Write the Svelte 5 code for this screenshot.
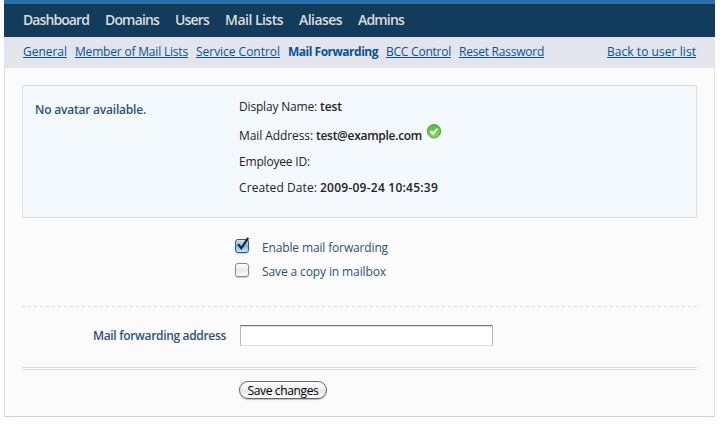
<script>
  const menu = [
    ['Dashboard', 66], ['Domains', 54], ['Users', 34],
    ['Mail Lists', 58], ['Aliases', 43], ['Admins', 46]
  ];
  const tabs = [
    ['General', 44], ['Member of Mail Lists', 113], ['Service Control', 84],
    ['Mail Forwarding', 90], ['BCC Control', 65], ['Reset Rassword', 85]
  ];
  let forward = $state(true);
  let keepCopy = $state(false);
  let address = $state('');

  // Spreads the letters of a label over its given width.
  function fit(node, width) {
    const natural = node.getBoundingClientRect().width;
    node.style.letterSpacing = (width - natural) / node.textContent.length + 'px';
  }
</script>

<div class="page">
  <nav class="menu">
    {#each menu as [name, w]}<a href="#top"><span use:fit={w}>{name}</span></a>{/each}
  </nav>
  <nav class="tabs">
    {#each tabs as [name, w]}
      <a href="#top" class:active={name === 'Mail Forwarding'}><span use:fit={w}>{name}</span></a>
    {/each}
    <a href="#top" class="back"><span use:fit={89}>Back to user list</span></a>
  </nav>
  <main>
    <section class="profile">
      <div class="avatar"><span use:fit={111}>No avatar available.</span></div>
      <div class="details">
        <p><span use:fit={78}>Display Name:</span><b use:fit={22}>test</b></p>
        <p class="mail"><span use:fit={74}>Mail Address:</span><b use:fit={106}>test@example.com</b>
          <svg width="16" height="16" viewBox="0 0 16 16">
            <defs><linearGradient id="ok" x1="0" y1="0" x2="0" y2="1"><stop offset="0" stop-color="#55b83f" /><stop offset="1" stop-color="#7fe04d" /></linearGradient></defs>
            <ellipse cx="8" cy="9" rx="7" ry="7" fill="#d2dbd5" />
            <circle cx="8" cy="8" r="6.6" fill="url(#ok)" stroke="#48a43b" stroke-width=".9" />
            <path d="M4.5 8.2 7 10.6 11.5 5.8" fill="none" stroke="#fff" stroke-width="2.2" />
          </svg>
        </p>
        <p><span use:fit={71}>Employee ID:</span></p>
        <p><span use:fit={78}>Created Date:</span><b use:fit={118}>2009-09-24 10:45:39</b></p>
      </div>
    </section>
    <section class="options">
      <label><input type="checkbox" bind:checked={forward} /><i class="box" class:on={forward}>
        {#if forward}<svg width="18" height="18" viewBox="0 0 18 18"><path d="M4.2 7.2 7.3 11.3 14.2 .8" fill="none" stroke="#17202b" stroke-width="2.1" /></svg>{/if}
      </i><span use:fit={126}>Enable mail forwarding</span></label>
      <label><input type="checkbox" bind:checked={keepCopy} /><i class="box" class:on={keepCopy}></i><span use:fit={124}>Save a copy in mailbox</span></label>
    </section>
    <section class="address">
      <label for="addr"><span use:fit={133}>Mail forwarding address</span></label>
      <input id="addr" type="text" bind:value={address} />
    </section>
    <div class="actions"><button type="button"><span use:fit={71}>Save changes</span></button></div>
  </main>
</div>

<style>
  :global(body) { background: #fff; }
  .page {
    box-sizing: border-box; width: 711px; height: 417px; margin-left: 4px;
    font: 12px/20px "Open Sans", Lato, sans-serif; color: #222; white-space: nowrap;
  }
  .menu {
    box-sizing: border-box; display: flex; gap: 16px; height: 37px; padding: 6px 19px 0;
    background: #123b5c; border-top: 4px solid #2a6fa8;
  }
  .menu a { color: #ddd; text-decoration: none; font-size: 14px; font-weight: 600; line-height: 20px; }
  .tabs {
    box-sizing: border-box; display: flex; gap: 8px; height: 31px; padding: 5px 19px 0;
    background: #e4e4ec;
  }
  .tabs a { height: 15px; color: #05539a; text-decoration: none; border-bottom: 1px solid #05539a; }
  .tabs a.active { font-weight: 700; border-color: transparent; }
  .tabs .back { margin-left: auto; }
  main {
    box-sizing: border-box; height: 349px; padding: 17px 17px 0; background: #fbfbfb;
    border: solid #dce3ea; border-width: 0 1px 1px; border-bottom-color: #c8d0dc;
  }
  .profile {
    box-sizing: border-box; display: flex; height: 133px; background: #f4f9fe;
    border: 1px solid #d8dfe4;
  }
  .avatar { width: 204px; padding: 14px 0 0 12px; color: #2c527a; font-weight: 600; box-sizing: content-box; }
  .details { padding-top: 11px; }
  p { display: flex; align-items: center; gap: 3px; height: 20px; margin: 0 0 6px; }
  b { font-weight: 600; }
  .mail { margin-top: 9px; }
  .mail svg { margin: -10px 0 0 1px; }
  .options {
    display: flex; flex-direction: column; gap: 4px; height: 69px; padding: 20px 0 0 213px;
    color: #2c527a;
    background: repeating-linear-gradient(90deg, #dadfe4 0 3px, transparent 3px 6px) bottom / 100% 1px no-repeat;
  }
  .options label { display: flex; align-items: center; height: 20px; }
  .options input { position: absolute; opacity: 0; margin: 0; }
  .box {
    box-sizing: border-box; position: relative; width: 14px; height: 14px; margin: -4px 13px 0 0;
    border: 1px solid #888; border-radius: 3px; background: linear-gradient(#fff, #e9e9e9 50%, #fafafa);
    box-shadow: 0 1px 1px #ccc;
  }
  .box.on { border-color: #38567e; background: linear-gradient(#d2e5f8, #7db4ea 50%, #b9edff); }
  .box svg { position: absolute; left: -2px; top: -3px; }
  .address {
    box-sizing: border-box; display: flex; height: 63px; padding-top: 18px;
    border-bottom: 3px double #d9dfe4;
  }
  .address label { width: 204px; margin-right: 14px; color: #2c527a; font-weight: 600; text-align: right; position: relative; top: 1px; }
  .address input {
    box-sizing: border-box; width: 253px; height: 21px; padding: 0 4px; border-radius: 0;
    border: 1px solid #b5b5b5; border-top-color: #777; border-bottom-color: #ddd; background: #fff;
    box-shadow: inset 0 1px 0 #ddd; outline: none;
  }
  .actions { padding: 11px 0 0 217px; }
  button {
    display: block; box-sizing: border-box; width: 88px; height: 18px; padding: 0;
    font: inherit; line-height: 15px;
    border: 1px solid #666; border-radius: 9px; color: #000;
    background: linear-gradient(#fff, #eee 50%, #e5e5e5 52%, #fff); box-shadow: 0 1px 1px #bbb;
  }
</style>
